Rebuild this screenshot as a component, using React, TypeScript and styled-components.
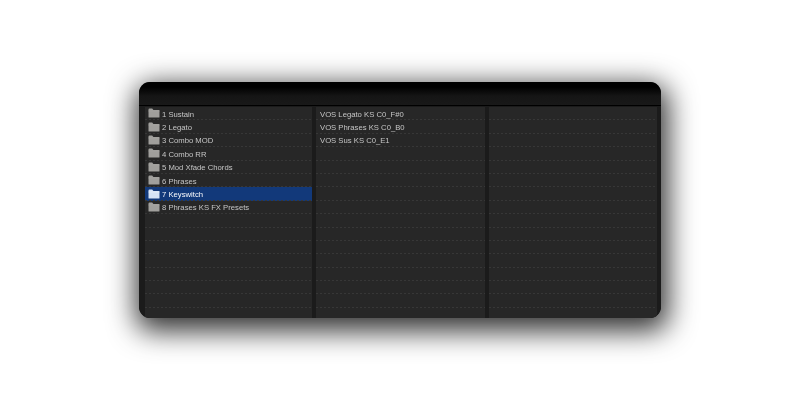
import React from "react";
import styled, { createGlobalStyle } from "styled-components";

const Global = createGlobalStyle`
  html, body { margin: 0; padding: 0; background: #fff; }
  body { width: 800px; height: 400px; overflow: hidden; font-family: "Liberation Sans", Arial, sans-serif; }
`;

const Page = styled.div`
  width: 800px;
  height: 400px;
  box-sizing: border-box;
  padding: 82px 139px;
`;

const Shadow = styled.div`
  border-radius: 11px;
  box-shadow: 2px 8px 28px 5px rgba(0, 0, 0, 0.8);
`;

const Window = styled.div`
  width: 522px;
  height: 236px;
  display: flex;
  flex-direction: column;
  background: #1c1c1c;
  border-radius: 11px;
  overflow: hidden;
`;

const Header = styled.div`
  flex: 0 0 24px;
  box-sizing: border-box;
  background: linear-gradient(#000 0, #000 5px, #151515 14px, #191919 23px);
  border-bottom: 1px solid #000;
`;

const Columns = styled.div`
  flex: 1;
  min-height: 0;
  display: grid;
  grid-template-columns: 167px 169px 168px;
  column-gap: 4px;
  padding: 1px 4px 0 6px;
  background: #1b1b1b;
`;

const Pane = styled.div`
  background: #272727;
  overflow: hidden;
`;

const Row = styled.div<{ $selected?: boolean; $icon?: boolean }>`
  height: 13.4px;
  box-sizing: border-box;
  display: flex;
  align-items: center;
  gap: 2px;
  padding: 0 0 1px ${(p) => (p.$icon ? "3px" : "4px")};
  font-size: 7.7px;
  white-space: nowrap;
  color: ${(p) => (p.$selected ? "#f8f9fc" : "#c6c6c6")};
  background-color: ${(p) => (p.$selected ? "#12397a" : "transparent")};
  background-image: repeating-linear-gradient(90deg, #373737 0 2px, transparent 2px 4px);
  background-size: 100% 1px;
  background-position: 0 100%;
  background-repeat: no-repeat;
`;

const FolderIcon = styled.svg`
  flex: none;
  width: 12px;
  height: 10px;
`;

const Label = styled.span`
  margin-top: 2px;
  filter: blur(0.3px);
`;

const Folder = ({ selected }: { selected?: boolean }) => (
  <FolderIcon viewBox="0 0 12 10">
    <path
      d="M0.5 1.5 Q0.5 0.5 1.5 0.5 H4.2 L5.4 2 H11 Q11.5 2 11.5 2.6 V9 Q11.5 9.5 11 9.5 H1 Q0.5 9.5 0.5 9 Z"
      fill={selected ? "#d5e3f6" : "#a09f9c"}
    />
    <path d="M0.5 3 H11.5" stroke={selected ? "#eef4fc" : "#aaa9a6"} strokeWidth="0.6" />
  </FolderIcon>
);

const folders = [
  "1 Sustain",
  "2 Legato",
  "3 Combo MOD",
  "4 Combo RR",
  "5 Mod Xfade Chords",
  "6 Phrases",
  "7 Keyswitch",
  "8 Phrases KS FX Presets",
];
const patches = ["VOS Legato KS C0_F#0", "VOS Phrases KS C0_B0", "VOS Sus KS C0_E1"];
const ROWS = 16;
const blanks = (n: number) => Array.from({ length: Math.max(0, ROWS - n) }, (_, i) => <Row key={`b${i}`} />);

export default function App() {
  return (
    <Page>
      <Global />
      <Shadow>
        <Window>
          <Header />
          <Columns>
            <Pane>
              {folders.map((f, i) => (
                <Row key={f} $icon $selected={i === 6}>
                  <Folder selected={i === 6} />
                  <Label>{f}</Label>
                </Row>
              ))}
              {blanks(folders.length)}
            </Pane>
            <Pane>
              {patches.map((p) => (
                <Row key={p}>
                  <Label>{p}</Label>
                </Row>
              ))}
              {blanks(patches.length)}
            </Pane>
            <Pane>{blanks(0)}</Pane>
          </Columns>
        </Window>
      </Shadow>
    </Page>
  );
}
